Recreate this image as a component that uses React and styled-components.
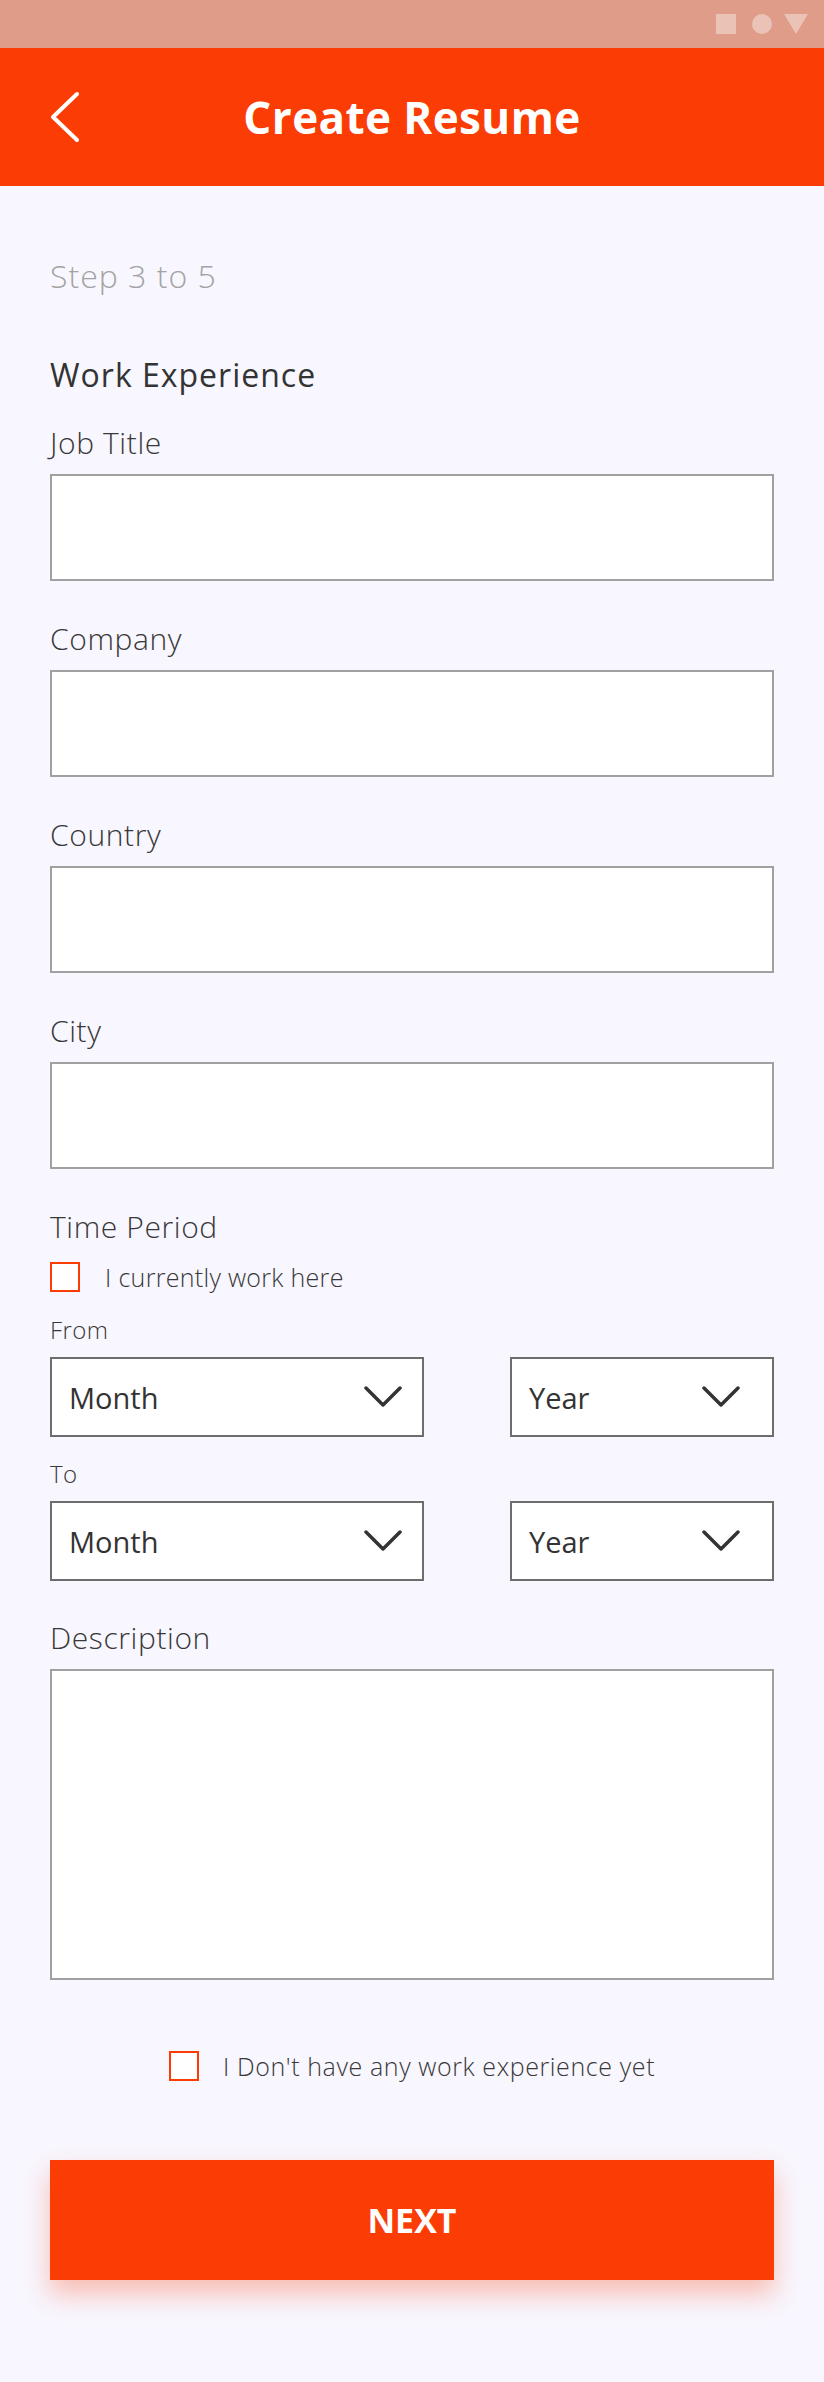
import React from "react";
import styled, { createGlobalStyle } from "styled-components";

const ORANGE = "#fb3c05";

const GlobalStyle = createGlobalStyle`
  * {
    box-sizing: border-box;
  }

  body {
    margin: 0;
    background: #f8f6fe;
    font-family: "Open Sans", "Liberation Sans", sans-serif;
  }
`;

const Screen = styled.div`
  width: 824px;
  min-height: 2382px;
  background: #f8f6fe;
  display: flex;
  flex-direction: column;
`;

const StatusBar = styled.div`
  height: 48px;
  padding-right: 16px;
  display: flex;
  justify-content: flex-end;
  align-items: center;
  background: #de9c89;
`;

const Header = styled.header`
  height: 138px;
  padding: 0 50px;
  display: grid;
  grid-template-columns: 1fr auto 1fr;
  align-items: center;
  background: ${ORANGE};
`;

const BackButton = styled.button`
  justify-self: start;
  padding: 0;
  border: none;
  background: none;
  display: flex;
  cursor: pointer;
`;

const Title = styled.h1`
  margin: 0;
  font-size: 44px;
  font-weight: 700;
  color: #fff;
  letter-spacing: 0.4px;
`;

const Main = styled.main`
  padding: 70px 50px 100px;
  display: flex;
  flex-direction: column;
`;

const Step = styled.p`
  margin: 0;
  font-size: 32px;
  line-height: 40px;
  font-weight: 300;
  letter-spacing: 1px;
  color: #a3a3a3;
`;

const SectionTitle = styled.h2`
  margin: 59px 0 28px;
  font-size: 32px;
  line-height: 40px;
  font-weight: 500;
  letter-spacing: 1px;
  color: #333;
`;

const Field = styled.div`
  display: flex;
  flex-direction: column;
  gap: 11px;
  margin-top: ${(p) => p.$top || 0}px;
  margin-bottom: ${(p) => p.$space || 38}px;
`;

const Label = styled.label`
  font-size: 30px;
  line-height: 40px;
  font-weight: 300;
  letter-spacing: 0.6px;
  color: #383838;
`;

const SmallLabel = styled.span`
  display: block;
  margin: ${(p) => p.$top}px 0 12px;
  font-size: 24px;
  line-height: 30px;
  font-weight: 300;
  letter-spacing: 0.4px;
  color: #383838;
`;

const TextInput = styled.input`
  height: 107px;
  width: 100%;
  margin: 0;
  border: 2px solid #a0a0a0;
  border-radius: 0;
  background: #fff;
  outline: none;
`;

const TextArea = styled.textarea`
  display: block;
  height: 311px;
  width: 100%;
  margin: 0;
  border: 2px solid #a0a0a0;
  border-radius: 0;
  background: #fff;
  resize: none;
  outline: none;
`;

const CheckRow = styled.label`
  height: 30px;
  display: flex;
  align-items: center;
  gap: ${(p) => p.$gap || 25}px;
  justify-content: ${(p) => (p.$center ? "center" : "flex-start")};
  margin-top: ${(p) => p.$top || 0}px;
  font-size: 25px;
  line-height: 30px;
  font-weight: 300;
  letter-spacing: ${(p) => (p.$center ? 0.6 : 0.3)}px;
  color: #383838;
`;

const Box = styled.span`
  width: 30px;
  height: 30px;
  border: 2px solid ${ORANGE};
  background: #fff;
  flex-shrink: 0;
`;

const SelectRow = styled.div`
  display: grid;
  grid-template-columns: 374fr 264fr;
  gap: 86px;
`;

const Select = styled.div`
  height: 80px;
  padding: 0 ${(p) => p.$arrowInset}px 0 17px;
  display: flex;
  align-items: center;
  justify-content: space-between;
  border: 2px solid #6d6d6d;
  background: #fff;
  font-size: 29px;
  font-weight: 400;
  color: #333;
  cursor: pointer;
`;

const NextButton = styled.button`
  margin-top: 79px;
  height: 120px;
  width: 100%;
  border: none;
  background: ${ORANGE};
  box-shadow: 0 14px 24px rgba(251, 60, 5, 0.3);
  font-family: inherit;
  font-size: 34px;
  font-weight: 700;
  color: #fff;
  cursor: pointer;
`;

const StatusIcons = () => (
  <svg width="92" height="20" viewBox="0 0 92 20" fill="#ebc3b6">
    <rect x="0" y="0" width="20" height="20" />
    <circle cx="46" cy="10" r="10" />
    <path d="M68 0 H92 L80 20 Z" />
  </svg>
);

const BackIcon = () => (
  <svg width="30" height="52" viewBox="0 0 30 52" fill="none">
    <path
      d="M27 3 L3 26 L27 49"
      stroke="#fff"
      strokeWidth="4"
      strokeLinecap="round"
      strokeLinejoin="round"
    />
  </svg>
);

const Chevron = () => (
  <svg width="38" height="22" viewBox="0 0 38 22" fill="none">
    <path
      d="M2 2 L19 19 L36 2"
      stroke="#333"
      strokeWidth="3.5"
      strokeLinecap="round"
      strokeLinejoin="round"
    />
  </svg>
);

const fields = ["Job Title", "Company", "Country", "City"];

const PeriodRow = () => (
  <SelectRow>
    <Select $arrowInset={20}>
      Month
      <Chevron />
    </Select>
    <Select $arrowInset={32}>
      Year
      <Chevron />
    </Select>
  </SelectRow>
);

const App = () => {
  return (
    <>
      <GlobalStyle />
      <Screen>
        <StatusBar>
          <StatusIcons />
        </StatusBar>
        <Header>
          <BackButton type="button" aria-label="Back">
            <BackIcon />
          </BackButton>
          <Title>Create Resume</Title>
        </Header>
        <Main>
          <Step>Step 3 to 5</Step>
          <SectionTitle>Work Experience</SectionTitle>
          {fields.map((name) => (
            <Field key={name}>
              <Label>{name}</Label>
              <TextInput type="text" />
            </Field>
          ))}
          <Label>Time Period</Label>
          <CheckRow $top={15}>
            <Box />
            I currently work here
          </CheckRow>
          <SmallLabel $top={23}>From</SmallLabel>
          <PeriodRow />
          <SmallLabel $top={22}>To</SmallLabel>
          <PeriodRow />
          <Field $top={37} $space={71}>
            <Label>Description</Label>
            <TextArea />
          </Field>
          <CheckRow $center $gap={24}>
            <Box />
            I Don't have any work experience yet
          </CheckRow>
          <NextButton type="button">NEXT</NextButton>
        </Main>
      </Screen>
    </>
  );
};

export default App;
